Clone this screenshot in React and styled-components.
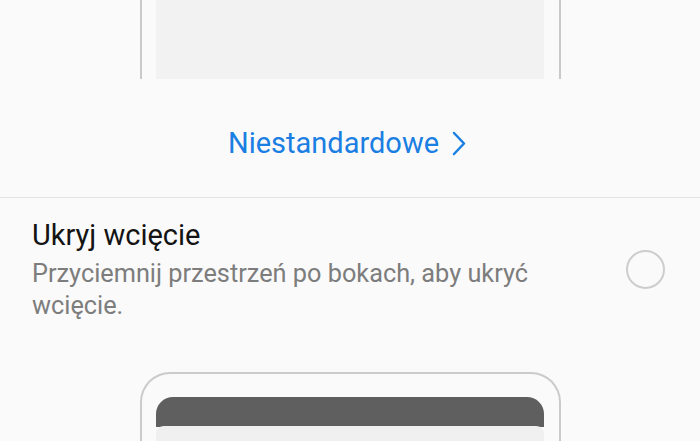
import styled, { createGlobalStyle } from 'styled-components'

const Global = createGlobalStyle`
  html, body {
    margin: 0;
    padding: 0;
    background: #fafafa;
    font-family: Roboto, "Noto Sans", sans-serif;
    overflow: hidden;
  }
`

export const Page = styled.div`
  width: 700px;
  height: 441px;
  overflow: hidden;
  background: #fafafa;
`

export const PreviewTop = styled.div`
  display: flex;
  justify-content: center;
`

export const FrameSides = styled.div`
  width: 388px;
  height: 79px;
  padding: 0 15px 0 14px;
  border-left: 2px solid #c9c9c9;
  border-right: 2px solid #c9c9c9;
`

export const Screen = styled.div`
  height: 100%;
  background: #f2f2f2;
`

export const LinkRow = styled.div`
  height: 108px;
  padding: 10px 6px 0 0;
  display: flex;
  align-items: center;
  justify-content: center;
  gap: 13px;
  color: #1a7ee2;
  font-size: 29px;
`

export const Chevron = styled.svg`
  width: 14px;
  height: 25px;
  margin-top: 1px;
`

export const Divider = styled.div`
  height: 1px;
  background: #e3e3e3;
`

export const Option = styled.div`
  display: flex;
  align-items: center;
  padding: 19px 35px 0 32px;
`

export const OptionText = styled.div`
  flex: 1;
`

export const Title = styled.div`
  font-size: 29px;
  line-height: 36px;
  color: #141414;
`

export const Subtitle = styled.div`
  width: 540px;
  margin-top: 5px;
  font-size: 25.3px;
  line-height: 32px;
  color: #7d7d7d;
`

export const Radio = styled.div`
  width: 35px;
  height: 35px;
  border-radius: 50%;
  border: 2px solid #cdcdcd;
`

export const PreviewBottom = styled.div`
  display: flex;
  justify-content: center;
  padding-top: 50px;
`

export const Phone = styled.div`
  width: 388px;
  height: 80px;
  padding: 23px 15px 0 14px;
  border: 2px solid #cbcbcb;
  border-bottom: none;
  border-radius: 30px 30px 0 0;
`

export const StatusBar = styled.div`
  height: 30px;
  background: #5f5f5f;
  border-radius: 17px 17px 0 0;
`

export const Display = styled.div`
  height: 40px;
  background: #f0f0f0;
  border-radius: 8px 8px 0 0;
  margin-top: -1px;
`

export default function App() {
  return (
    <Page>
      <Global />
      <PreviewTop>
        <FrameSides>
          <Screen />
        </FrameSides>
      </PreviewTop>
      <LinkRow>
        <span>Niestandardowe</span>
        <Chevron viewBox="0 0 14 25" fill="none" stroke="#1a7ee2" strokeWidth="2.5" strokeLinecap="round" strokeLinejoin="round">
          <path d="M2 2l10 10.5L2 23" />
        </Chevron>
      </LinkRow>
      <Divider />
      <Option>
        <OptionText>
          <Title>Ukryj wcięcie</Title>
          <Subtitle>Przyciemnij przestrzeń po bokach, aby ukryć wcięcie.</Subtitle>
        </OptionText>
        <Radio />
      </Option>
      <PreviewBottom>
        <Phone>
          <StatusBar />
          <Display />
        </Phone>
      </PreviewBottom>
    </Page>
  )
}
